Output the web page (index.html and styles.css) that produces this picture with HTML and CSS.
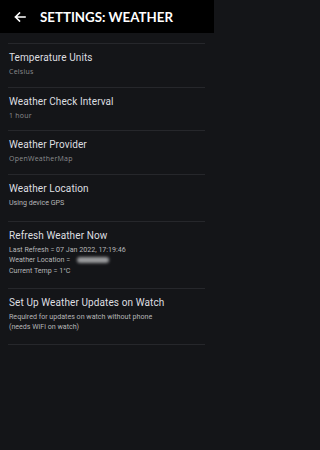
FILE: index.html
```html
<!DOCTYPE html>
<html>
<head>
<meta charset="utf-8">
<link rel="stylesheet" href="styles.css">
</head>
<body>
<div class="screen">
<header class="bar">
  <svg class="back" width="12" height="10" viewBox="0 0 12 10">
    <path d="M11 5H1.5M5.5 1L1.5 5L5.5 9" fill="none" stroke="#fff" stroke-width="1.6" stroke-linecap="square"/>
  </svg>
  <h1 class="bar-title">SETTINGS: WEATHER</h1>
</header>
<main class="list">
  <section class="item">
    <div class="title">Temperature Units</div>
    <div class="sub">Celsius</div>
  </section>
  <section class="item">
    <div class="title">Weather Check Interval</div>
    <div class="sub">1 hour</div>
  </section>
  <section class="item">
    <div class="title">Weather Provider</div>
    <div class="sub">OpenWeatherMap</div>
  </section>
  <section class="item item-detail">
    <div class="title">Weather Location</div>
    <div class="detail">Using device GPS</div>
  </section>
  <section class="item item-detail item-tall">
    <div class="title">Refresh Weather Now</div>
    <div class="detail">Last Refresh = 07 Jan 2022, 17:19:46</div>
    <div class="detail">Weather Location = <span class="blur"></span></div>
    <div class="detail">Current Temp = 1°C</div>
  </section>
  <section class="item item-detail item-last">
    <div class="title">Set Up Weather Updates on Watch</div>
    <div class="detail">Required for updates on watch without phone</div>
    <div class="detail">(needs WiFi on watch)</div>
  </section>
  <div class="end"></div>
</main>
</div>
</body>
</html>
```

FILE: styles.css
```css
html, body {
  margin: 0;
  padding: 0;
  background: #141518;
  height: 100%;
}
body {
  font-family: "Lato", "Liberation Sans", sans-serif;
  color: #e6e6e6;
}
.screen {
  width: 214px;
  min-height: 100%;
  background: #141518;
}
.bar {
  background: #000;
  height: 33px;
  display: flex;
  align-items: center;
  padding-left: 14px;
  gap: 14px;
}
.back {
  display: block;
  flex: none;
}
.bar-title {
  margin: 0;
  font-size: 13.3px;
  font-weight: 700;
  color: #fff;
  letter-spacing: 0;
  white-space: nowrap;
}
.list {
  padding: 10px 9px 0 8px;
}
.item {
  border-top: 1px solid #26272b;
  padding: 7px 1px 9.5px;
}
.item-detail {
  padding-bottom: 12.5px;
}
.item-tall,
.item-last {
  padding-bottom: 11.5px;
}
.title {
  font-family: "Roboto", "Liberation Sans", sans-serif;
  font-weight: 400;
  font-size: 10px;
  line-height: 13px;
  color: #dedfe0;
  letter-spacing: 0.1px;
}
.sub {
  margin-top: 3px;
  font-family: "Open Sans", "Liberation Sans", sans-serif;
  font-size: 7px;
  line-height: 10px;
  color: #8b8c8e;
  letter-spacing: 0.25px;
}
.detail {
  font-family: "Roboto", "Liberation Sans", sans-serif;
  font-size: 7.1px;
  line-height: 10.5px;
  color: #b4b5b7;
  white-space: nowrap;
}
.item-detail .title + .detail {
  margin-top: 3px;
}
.blur {
  display: inline-block;
  width: 32px;
  height: 6px;
  margin-left: 5px;
  vertical-align: -1px;
  background: #9a9b9d;
  filter: blur(1.5px);
  border-radius: 3px;
}
.end {
  border-top: 1px solid #26272b;
}
```
